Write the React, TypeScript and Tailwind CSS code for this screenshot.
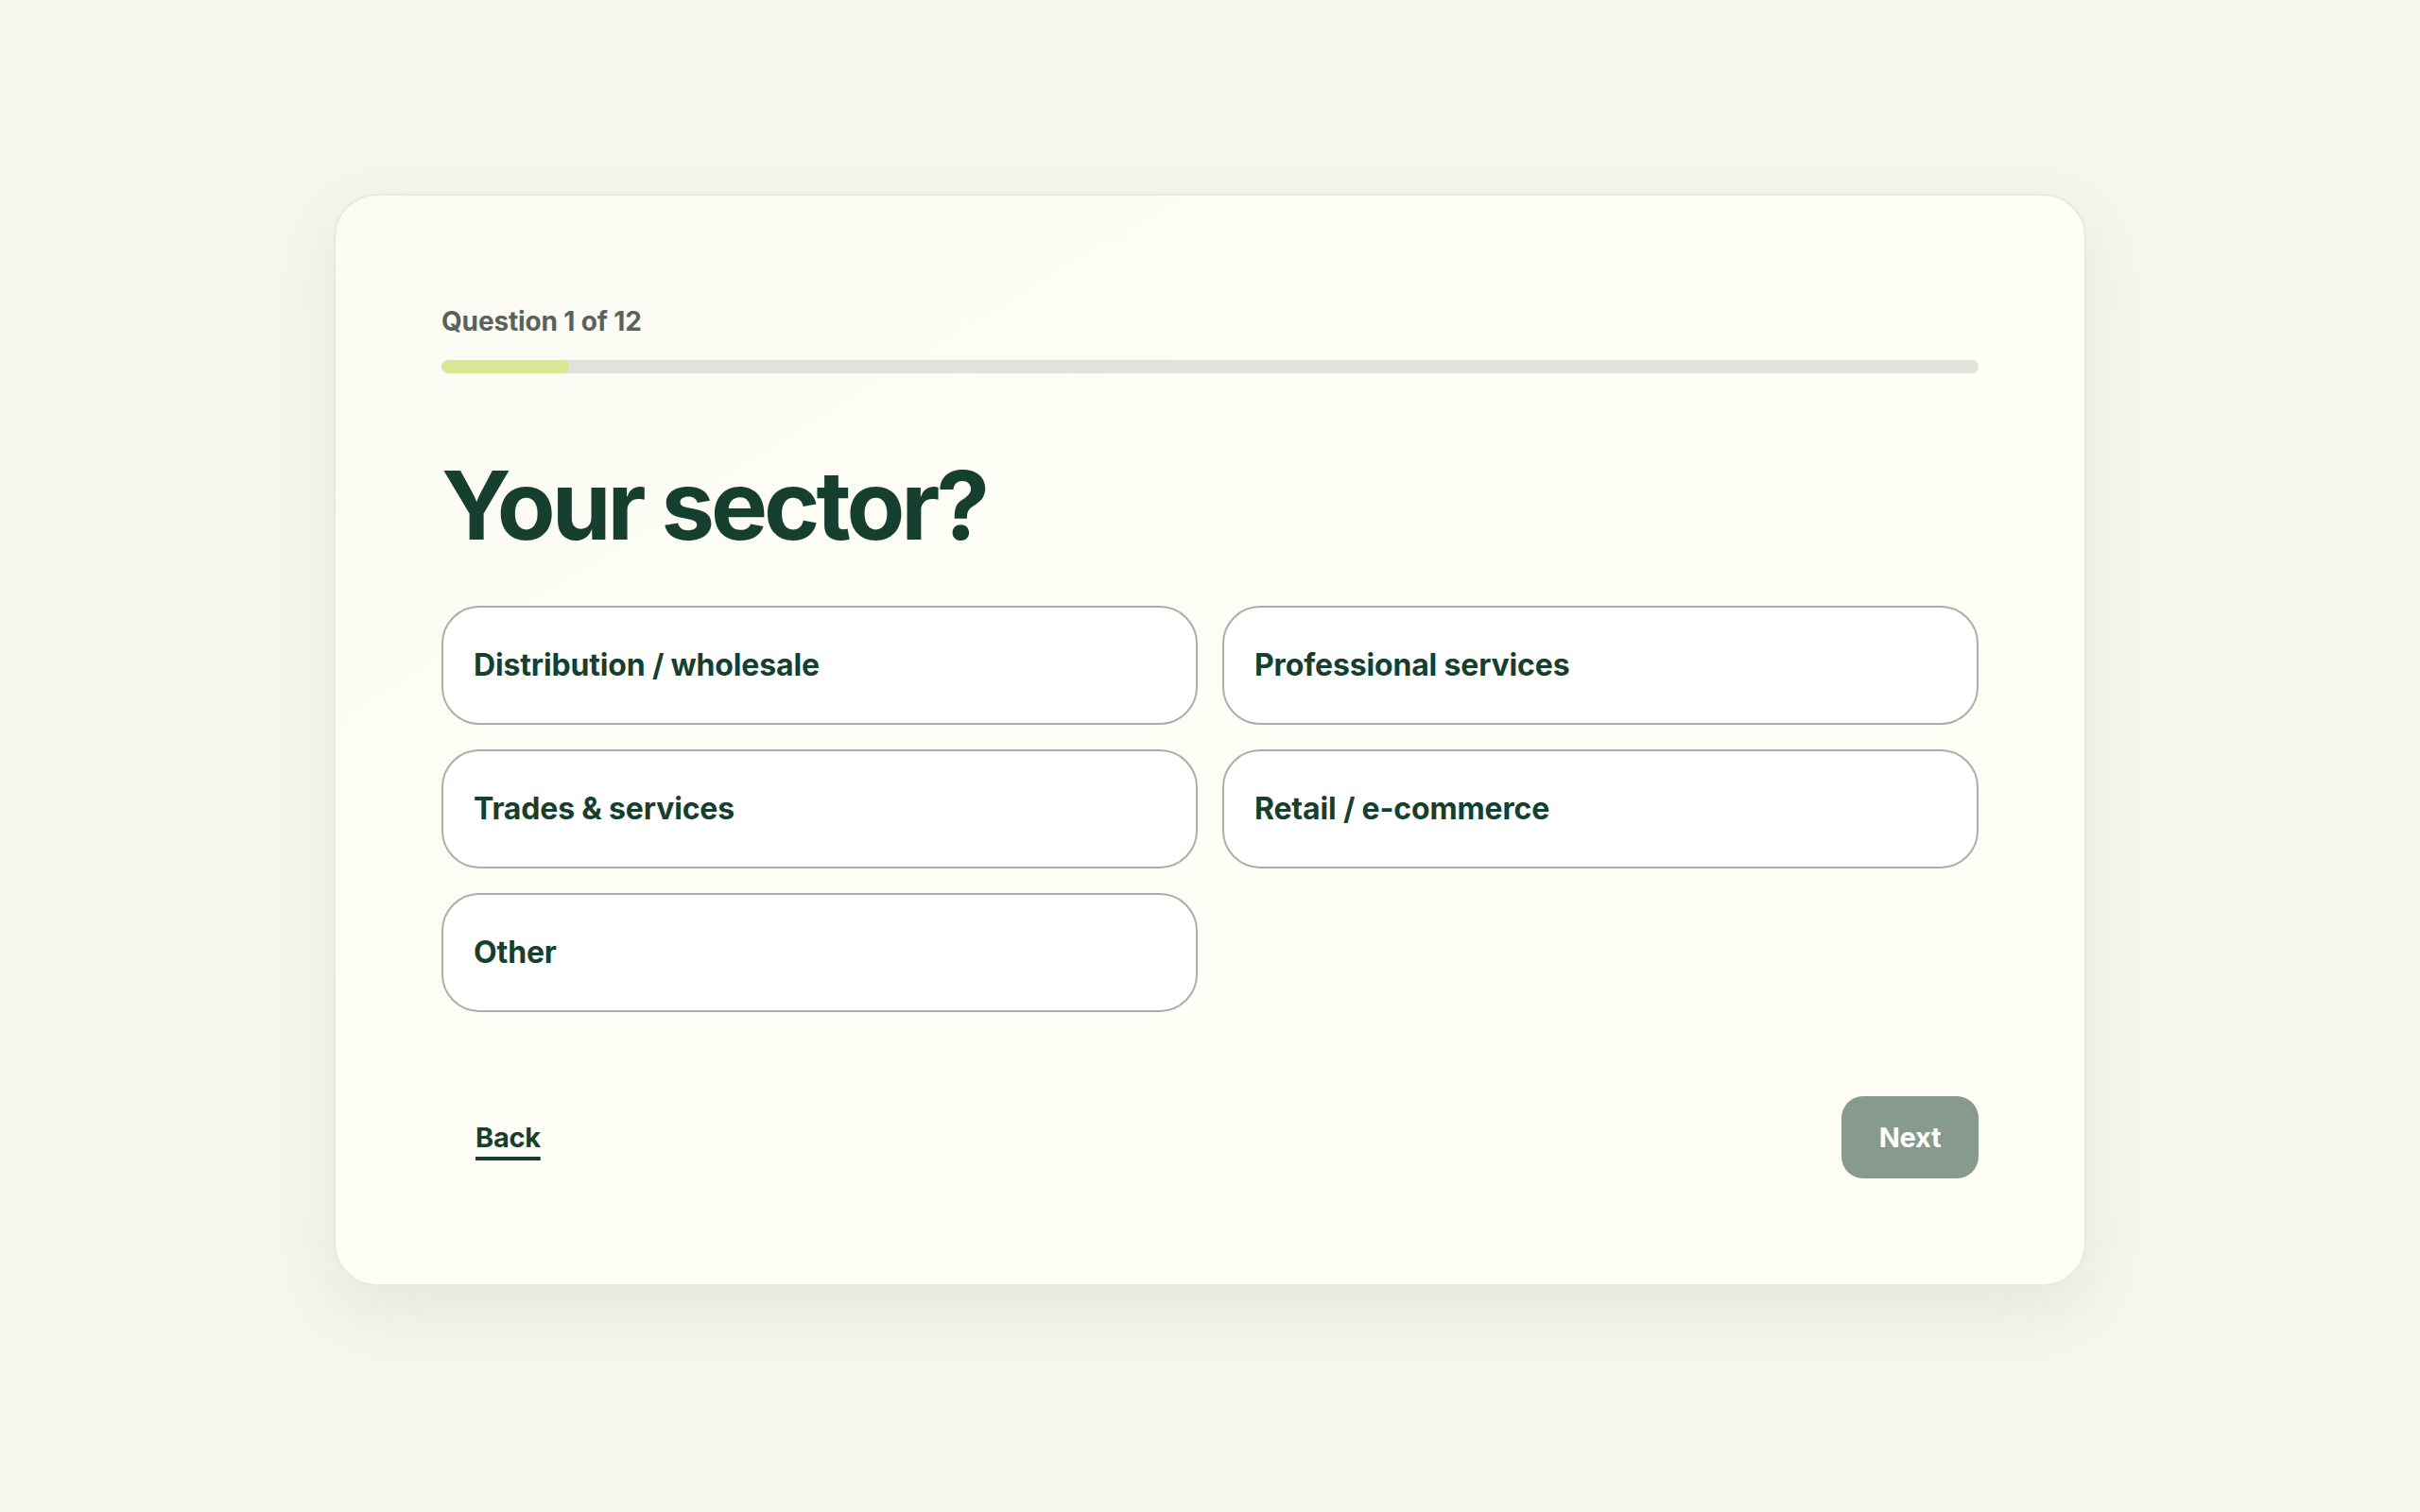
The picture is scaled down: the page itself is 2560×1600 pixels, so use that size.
import React from "react";

const options = [
  "Distribution / wholesale",
  "Professional services",
  "Trades & services",
  "Retail / e-commerce",
  "Other",
];

export default function App() {
  return (
    <div
      className="min-h-screen w-full bg-[#f6f6ef] flex justify-center pt-[205px]"
      style={{ fontFamily: "Inter, 'Noto Sans', sans-serif" }}
    >
      <div className="w-[1854px] h-[1156px] rounded-[46px] border-2 border-[#e9e9e1] bg-gradient-to-br from-[#fbfbf4] via-[#fefef6] to-[#fefef6] shadow-[0_24px_70px_rgba(70,70,40,0.09)] px-[112px] pt-[112px] pb-[112px] flex flex-col">
        <div className="text-[28px] leading-[42px] font-bold text-[#59625b] tracking-[-0.005em]">
          Question 1 of 12
        </div>
        <div className="mt-[20px] h-[16px] w-full rounded-full bg-[#e0e3db] overflow-hidden">
          <div className="h-full w-[8.33%] rounded-full bg-[#d6e894]" />
        </div>
        <h1 className="mt-[82px] text-[101px] leading-[114px] font-bold tracking-[-0.04em] text-[#173f2f]">
          Your sector?
        </h1>
        <div className="mt-[50px] grid grid-cols-2 gap-x-[26px] gap-y-[26px]">
          {options.map((o) => (
            <button
              key={o}
              className="h-[126px] rounded-[40px] border-2 border-[#a9b0a7] bg-white px-[32px] text-left text-[32px] font-bold text-[#173f2f] tracking-[-0.005em]"
            >
              {o}
            </button>
          ))}
        </div>
        <div className="mt-[89px] flex items-center justify-between">
          <button className="ml-[36px] text-[29px] font-bold text-[#173f2f] tracking-[-0.01em] underline decoration-[4px] underline-offset-[10px]">
            Back
          </button>
          <button className="h-[87px] w-[145px] rounded-[23px] bg-[#879a8e] text-[29px] font-bold text-white tracking-[-0.01em]">
            Next
          </button>
        </div>
      </div>
    </div>
  );
}
